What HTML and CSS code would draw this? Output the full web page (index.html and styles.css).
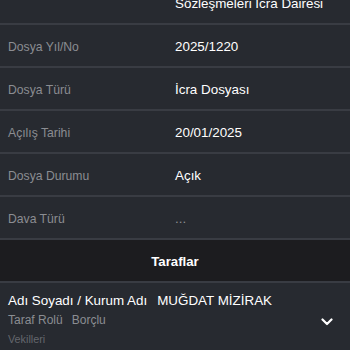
FILE: index.html
```html
<!DOCTYPE html>
<html lang="tr">
<head>
<meta charset="utf-8">
<link rel="stylesheet" href="styles.css">
</head>
<body>
<div class="page">
  <div class="list">
    <div class="row"><span class="label"></span><span class="value">Sözleşmeleri İcra Dairesi</span></div>
    <div class="row"><span class="label">Dosya Yıl/No</span><span class="value">2025/1220</span></div>
    <div class="row"><span class="label">Dosya Türü</span><span class="value">İcra Dosyası</span></div>
    <div class="row"><span class="label">Açılış Tarihi</span><span class="value">20/01/2025</span></div>
    <div class="row"><span class="label">Dosya Durumu</span><span class="value">Açık</span></div>
    <div class="row"><span class="label">Dava Türü</span><span class="value dim">...</span></div>
  </div>
  <div class="section">Taraflar</div>
  <div class="party">
    <div class="party-info">
      <div class="line1"><span>Adı Soyadı / Kurum Adı</span><span class="name">MUĞDAT MİZİRAK</span></div>
      <div class="line2"><span>Taraf Rolü</span><span class="role">Borçlu</span></div>
      <div class="line3">Vekilleri</div>
    </div>
    <svg class="chevron" width="12" height="8" viewBox="0 0 12 8"><path d="M1.5 1.5 L6 6 L10.5 1.5" fill="none" stroke="#ffffff" stroke-width="2.2" stroke-linecap="round" stroke-linejoin="round"/></svg>
  </div>
</div>
</body>
</html>
```

FILE: styles.css
```css
html, body {
  margin: 0;
  padding: 0;
  background: #272a30;
  font-family: "Liberation Sans", Arial, sans-serif;
  overflow: hidden;
}
.page {
  width: 350px;
  height: 350px;
  overflow: hidden;
}
.list {
  margin-top: -18px;
}
.row {
  display: flex;
  align-items: center;
  box-sizing: border-box;
  height: 43px;
  padding-top: 2px;
  border-bottom: 2px solid #393c43;
  padding-left: 8px;
}
.label {
  width: 167px;
  flex: none;
  color: #8b8d92;
  font-size: 12.2px;
}
.value {
  color: #ffffff;
  font-size: 13.4px;
}
.value.dim {
  color: #8b8d92;
}
.section {
  box-sizing: border-box;
  height: 43px;
  padding-top: 1px;
  background: #1c1c1f;
  border-bottom: 2px solid #393c43;
  display: flex;
  align-items: center;
  justify-content: center;
  color: #ffffff;
  font-weight: bold;
  font-size: 13.2px;
}
.party {
  display: flex;
  align-items: center;
  padding: 9px 17px 0 8px;
}
.party-info {
  flex: 1;
}
.line1 {
  color: #ffffff;
  font-size: 13.4px;
  line-height: 18px;
}
.line1 .name {
  margin-left: 10px;
}
.line2 {
  color: #8b8d92;
  font-size: 12px;
  line-height: 19px;
  margin-top: 1px;
}
.line2 .role {
  margin-left: 9px;
}
.line3 {
  color: #64676d;
  font-size: 10.8px;
  line-height: 19px;
}
.chevron {
  display: block;
  margin-top: 2px;
}
```
